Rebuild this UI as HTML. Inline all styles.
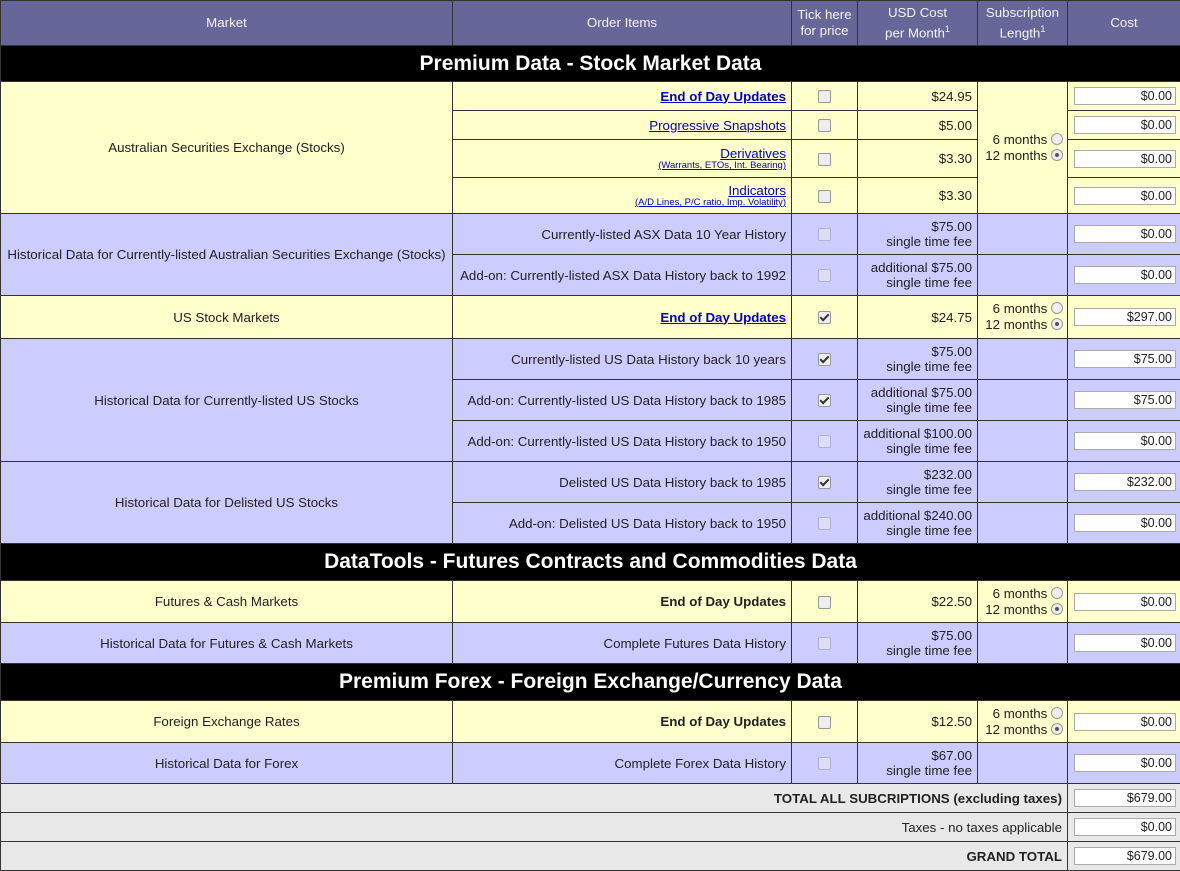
<!DOCTYPE html>
<html><head><meta charset="utf-8"><style>
body{margin:0;background:#fff;font-family:"Liberation Sans",Arial,sans-serif;font-size:13.3px;color:#222}
table{border-collapse:collapse;width:1180px;table-layout:fixed;position:absolute;left:0;top:0}
td,th{border:1px solid #333;padding:0 5px;box-sizing:border-box}
th{background:#666699;color:#f4f4f4;font-weight:normal;font-size:13.3px;line-height:16px}
.sec td{background:#000;color:#fff;font-weight:bold;font-size:21px;text-align:center}
.y td{background:#ffffcc}
.l td{background:#ccccff}
.t td{background:#e8e8e8}
.c{text-align:center}
.r{text-align:right}
a{color:#00c;text-decoration:underline}
.b{font-weight:bold}
small{font-size:9.5px;display:block;line-height:10px}
small a{color:#00c}
.cb{display:inline-block;width:11px;height:11px;border:1px solid #999;border-radius:2px;background:#eee;vertical-align:middle;position:relative}
.cb.k::after{content:"";position:absolute;left:3px;top:0px;width:3px;height:7px;border:solid #333;border-width:0 2px 2px 0;transform:rotate(45deg)}
.cb.d{opacity:.5}
.rd{display:inline-block;width:10px;height:10px;border:1px solid #999;border-radius:50%;background:#eee;vertical-align:-1px;position:relative}
.rd.k::after{content:"";position:absolute;left:3px;top:3px;width:4px;height:4px;border-radius:50%;background:#555}
.in{display:block;margin-left:1px;width:102px;height:18px;border:1px solid #aaa;background:#fff;text-align:right;box-sizing:border-box;padding:1px 3px 0 0;font-size:12.5px;line-height:15px}
.sub{text-align:right;line-height:16px;padding-right:4px}
</style></head><body>
<table>
<colgroup><col style="width:452px"><col style="width:339px"><col style="width:66px"><col style="width:120px"><col style="width:90px"><col style="width:113px"></colgroup>
<tr style="height:45px"><th>Market</th><th>Order Items</th><th>Tick here<br>for price</th><th>USD Cost<br>per Month<sup style="font-size:9px">1</sup></th><th>Subscription<br>Length<sup style="font-size:9px">1</sup></th><th>Cost</th></tr>
<tr class="sec" style="height:36px"><td colspan="6">Premium Data - Stock Market Data</td></tr>
<tr class="y" style="height:29px"><td rowspan="4" class="c">Australian Securities Exchange (Stocks)</td><td class="r b"><a>End of Day Updates</a></td><td class="c"><span class="cb"></span></td><td class="r">$24.95</td><td rowspan="4" class="sub">6 months <span class="rd"></span><br>12 months <span class="rd k"></span></td><td><span class="in">$0.00</span></td></tr>
<tr class="y" style="height:29px"><td class="r"><a>Progressive Snapshots</a></td><td class="c"><span class="cb"></span></td><td class="r">$5.00</td><td><span class="in">$0.00</span></td></tr>
<tr class="y" style="height:38px"><td class="r"><a>Derivatives</a><small><a>(Warrants, ETOs, Int. Bearing)</a></small></td><td class="c"><span class="cb"></span></td><td class="r">$3.30</td><td><span class="in">$0.00</span></td></tr>
<tr class="y" style="height:36px"><td class="r"><a>Indicators</a><small><a>(A/D Lines, P/C ratio, Imp. Volatility)</a></small></td><td class="c"><span class="cb"></span></td><td class="r">$3.30</td><td><span class="in">$0.00</span></td></tr>
<tr class="l" style="height:41px"><td rowspan="2" class="c">Historical Data for Currently-listed Australian Securities Exchange (Stocks)</td><td class="r">Currently-listed ASX Data 10 Year History</td><td class="c"><span class="cb d"></span></td><td class="r">$75.00<br>single time fee</td><td></td><td><span class="in">$0.00</span></td></tr>
<tr class="l" style="height:41px"><td class="r">Add-on: Currently-listed ASX Data History back to 1992</td><td class="c"><span class="cb d"></span></td><td class="r">additional $75.00<br>single time fee</td><td></td><td><span class="in">$0.00</span></td></tr>
<tr class="y" style="height:43px"><td class="c">US Stock Markets</td><td class="r b"><a>End of Day Updates</a></td><td class="c"><span class="cb k"></span></td><td class="r">$24.75</td><td class="sub">6 months <span class="rd"></span><br>12 months <span class="rd k"></span></td><td><span class="in">$297.00</span></td></tr>
<tr class="l" style="height:41px"><td rowspan="3" class="c">Historical Data for Currently-listed US Stocks</td><td class="r">Currently-listed US Data History back 10 years</td><td class="c"><span class="cb k"></span></td><td class="r">$75.00<br>single time fee</td><td></td><td><span class="in">$75.00</span></td></tr>
<tr class="l" style="height:41px"><td class="r">Add-on: Currently-listed US Data History back to 1985</td><td class="c"><span class="cb k"></span></td><td class="r">additional $75.00<br>single time fee</td><td></td><td><span class="in">$75.00</span></td></tr>
<tr class="l" style="height:41px"><td class="r">Add-on: Currently-listed US Data History back to 1950</td><td class="c"><span class="cb d"></span></td><td class="r">additional $100.00<br>single time fee</td><td></td><td><span class="in">$0.00</span></td></tr>
<tr class="l" style="height:41px"><td rowspan="2" class="c">Historical Data for Delisted US Stocks</td><td class="r">Delisted US Data History back to 1985</td><td class="c"><span class="cb k"></span></td><td class="r">$232.00<br>single time fee</td><td></td><td><span class="in">$232.00</span></td></tr>
<tr class="l" style="height:41px"><td class="r">Add-on: Delisted US Data History back to 1950</td><td class="c"><span class="cb d"></span></td><td class="r">additional $240.00<br>single time fee</td><td></td><td><span class="in">$0.00</span></td></tr>
<tr class="sec" style="height:37px"><td colspan="6">DataTools - Futures Contracts and Commodities Data</td></tr>
<tr class="y" style="height:42px"><td class="c">Futures &amp; Cash Markets</td><td class="r b">End of Day Updates</td><td class="c"><span class="cb"></span></td><td class="r">$22.50</td><td class="sub">6 months <span class="rd"></span><br>12 months <span class="rd k"></span></td><td><span class="in">$0.00</span></td></tr>
<tr class="l" style="height:41px"><td class="c">Historical Data for Futures &amp; Cash Markets</td><td class="r">Complete Futures Data History</td><td class="c"><span class="cb d"></span></td><td class="r">$75.00<br>single time fee</td><td></td><td><span class="in">$0.00</span></td></tr>
<tr class="sec" style="height:37px"><td colspan="6">Premium Forex - Foreign Exchange/Currency Data</td></tr>
<tr class="y" style="height:42px"><td class="c">Foreign Exchange Rates</td><td class="r b">End of Day Updates</td><td class="c"><span class="cb"></span></td><td class="r">$12.50</td><td class="sub">6 months <span class="rd"></span><br>12 months <span class="rd k"></span></td><td><span class="in">$0.00</span></td></tr>
<tr class="l" style="height:41px"><td class="c">Historical Data for Forex</td><td class="r">Complete Forex Data History</td><td class="c"><span class="cb d"></span></td><td class="r">$67.00<br>single time fee</td><td></td><td><span class="in">$0.00</span></td></tr>
<tr class="t" style="height:29px"><td colspan="5" class="r b">TOTAL ALL SUBCRIPTIONS (excluding taxes)</td><td><span class="in">$679.00</span></td></tr>
<tr class="t" style="height:29px"><td colspan="5" class="r">Taxes - no taxes applicable</td><td><span class="in">$0.00</span></td></tr>
<tr class="t" style="height:29px"><td colspan="5" class="r b">GRAND TOTAL</td><td><span class="in">$679.00</span></td></tr>
</table>
</body></html>
